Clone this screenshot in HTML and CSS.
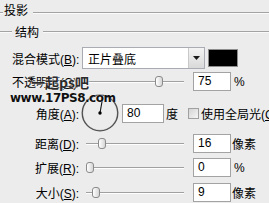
FILE: index.html
```html
<!DOCTYPE html>
<html>
<head>
<meta charset="utf-8">
<link rel="stylesheet" href="styles.css">
</head>
<body>
<div class="panel">
  <div class="group g1"><span class="line lead"></span><span class="title">投影</span><span class="line grow"></span></div>
  <div class="group g2"><span class="line lead"></span><span class="title">结构</span><span class="line grow"></span></div>

  <div class="row r-blend">
    <span class="lbl">混合模式(<u>B</u>):</span>
    <div class="select">
      <span class="select-text">正片叠底</span>
      <span class="select-btn"><svg width="7" height="4" viewBox="0 0 7 4"><path d="M0 0H7L3.5 4Z" fill="#1a1a1a"/></svg></span>
    </div>
    <span class="swatch"></span>
  </div>

  <div class="row r-opacity">
    <span class="lbl">不透明度(<u>O</u>):</span>
    <div class="slider"><span class="thumb" style="left:69px"></span></div>
    <span class="field">75</span><span class="unit">%</span>
  </div>

  <div class="row r-angle">
    <span class="lbl">角度(<u>A</u>):</span>
    <svg class="dial" width="38" height="38" viewBox="0 0 38 38">
      <circle cx="19" cy="19" r="17.3" fill="none" stroke="#bdbdbd" stroke-width="1"/>
      <circle cx="19" cy="19" r="17.8" fill="none" stroke="#505050" stroke-width="1.3"/>
      <line x1="19" y1="19" x2="21.2" y2="6.5" stroke="#111" stroke-width="1.1"/>
      <circle cx="19" cy="19" r="1.7" fill="#000"/>
    </svg>
    <span class="field wide">80</span><span class="unit deg">度</span>
    <span class="check"></span><span class="check-label">使用全局光(<u>G</u>)</span>
  </div>

  <div class="row r-dist">
    <span class="lbl">距离(<u>D</u>):</span>
    <div class="slider"><span class="thumb" style="left:12px"></span></div>
    <span class="field">16</span><span class="unit px">像素</span>
  </div>

  <div class="row r-spread">
    <span class="lbl">扩展(<u>R</u>):</span>
    <div class="slider"><span class="thumb" style="left:0px"></span></div>
    <span class="field">0</span><span class="unit">%</span>
  </div>

  <div class="row r-size">
    <span class="lbl">大小(<u>S</u>):</span>
    <div class="slider"><span class="thumb" style="left:6px"></span></div>
    <span class="field">9</span><span class="unit px">像素</span>
  </div>

  <div class="wm1">一起ps吧</div>
  <div class="wm2">www.17PS8.com</div>
</div>
</body>
</html>
```

FILE: styles.css
```css
html, body {
  margin: 0;
  padding: 0;
}
body {
  background: #ececec;
  font-family: "Liberation Sans", "Noto Sans CJK SC", sans-serif;
  font-size: 12px;
  color: #000;
}
.panel {
  position: relative;
  width: 269px;
  height: 203px;
  overflow: hidden;
}
.group {
  display: flex;
  align-items: center;
  height: 20px;
}
.line {
  height: 0;
  border-top: 1px solid #a3a3a3;
  border-bottom: 1px solid #fafafa;
}
.line.grow {
  flex: 1;
}
.title {
  font-family: "Noto Sans CJK SC", sans-serif;
  line-height: 14px;
}
.g1 .line {
  margin-top: 6px;
}
.g1 .lead {
  width: 3px;
}
.g1 .title {
  margin: 0 5px 0 1px;
}
.g2 {
  margin-top: 2px;
}
.g2 .lead {
  width: 12px;
}
.g2 .title {
  margin: 0 4px 0 3px;
}

.row {
  display: flex;
  align-items: center;
  padding-left: 12px;
  height: 19px;
}
.lbl {
  width: 67px;
  text-align: right;
  white-space: nowrap;
  flex: none;
}
.r-blend {
  margin-top: 5px;
  height: 22px;
}
.select {
  margin-left: 3px;
  width: 123px;
  height: 22px;
  box-sizing: border-box;
  border: 1px solid #a9adb3;
  background: #fff;
  display: flex;
  align-items: center;
  flex: none;
}
.select-text {
  flex: 1;
  padding-left: 5px;
}
.select-btn {
  width: 16px;
  height: 20px;
  box-sizing: border-box;
  border-left: 1px solid #c9c9c9;
  background: linear-gradient(#f4f4f4, #d9d9d9);
  display: flex;
  align-items: center;
  justify-content: center;
}
.swatch {
  margin-left: 3px;
  width: 30px;
  height: 18px;
  box-sizing: border-box;
  background: #000;
  border: 1px solid #8d8d8d;
  flex: none;
}

.r-opacity {
  margin-top: 3px;
}
.r-angle {
  margin-top: 3px;
  height: 38px;
}
.r-dist {
  margin-top: 2px;
}
.r-spread {
  margin-top: 5px;
}
.r-size {
  margin-top: 6px;
}

.slider {
  position: relative;
  margin-left: 7px;
  width: 98px;
  height: 0;
  border-top: 1px solid #a0a0a0;
  border-bottom: 1px solid #fdfdfd;
  flex: none;
}
.thumb {
  position: absolute;
  top: -6px;
  width: 8px;
  height: 11px;
  box-sizing: border-box;
  border: 1px solid #8a8a8a;
  border-radius: 3px;
  background: linear-gradient(90deg, #ffffff, #d6d6d6);
}
.field {
  margin-left: 9px;
  width: 38px;
  height: 19px;
  box-sizing: border-box;
  border: 1px solid #a3a3a3;
  background: #fff;
  padding-left: 4px;
  line-height: 17px;
  flex: none;
}
.unit {
  margin-left: 3px;
  white-space: nowrap;
}
.unit.px {
  margin-left: 1px;
}

.dial {
  margin-left: 2px;
  flex: none;
}
.field.wide {
  margin-left: 3px;
  width: 42px;
}
.unit.deg {
  margin-left: 2px;
}
.check {
  margin-left: 10px;
  width: 11px;
  height: 11px;
  box-sizing: border-box;
  border: 1px solid #a0a0a0;
  background: linear-gradient(135deg, #d4d4d4, #f6f6f6);
  flex: none;
}
.check-label {
  margin-left: 2px;
  white-space: nowrap;
}

.wm1 {
  position: absolute;
  left: 31px;
  top: 73px;
  font-family: "Noto Sans CJK SC", sans-serif;
  font-weight: bold;
  font-size: 14px;
  line-height: 18px;
  color: #2b2b2b;
  text-shadow: 0 0 2px #fff, 0 0 1px #fff;
}
.wm2 {
  position: absolute;
  left: 10px;
  top: 91px;
  font-family: "DejaVu Sans", sans-serif;
  font-weight: bold;
  font-size: 12px;
  line-height: 14px;
  letter-spacing: -0.5px;
  color: #111;
  text-shadow: 0 0 1px #fff;
}
```
